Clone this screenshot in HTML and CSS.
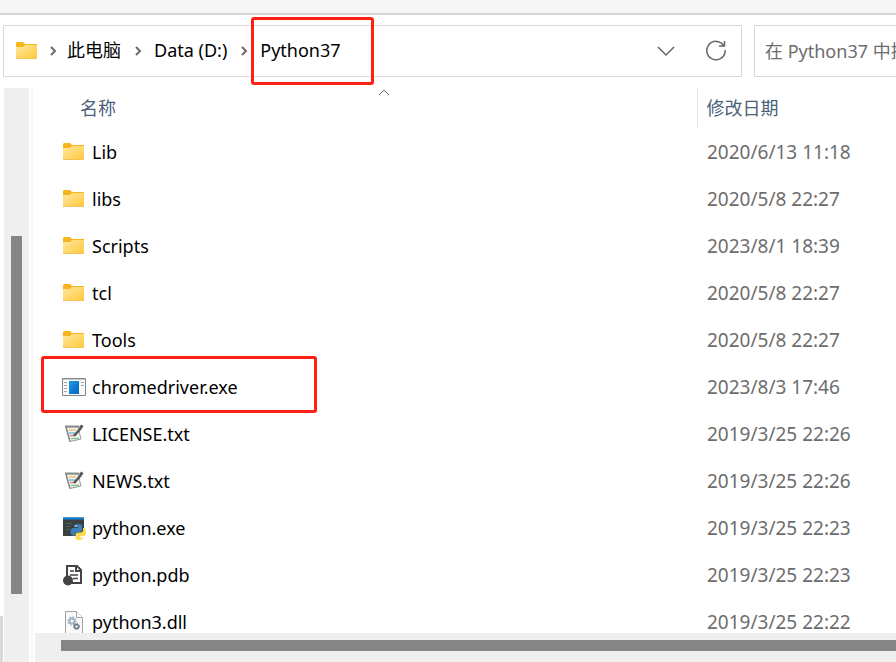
FILE: index.html
```html
<!DOCTYPE html>
<html lang="zh-CN">
<head>
	<meta charset="UTF-8">
	<meta name="viewport" content="width=device-width, initial-scale=1.0">
	<title>Python37</title>
	<link rel="stylesheet" href="styles.css">
</head>
<body>

	<!-- shared icons -->
	<svg class="sprite" aria-hidden="true">
		<defs>
			<linearGradient id="folderFill" x1="0" y1="0" x2="1" y2="1">
				<stop offset="0" stop-color="#ffe8a0"/>
				<stop offset="1" stop-color="#ffc83a"/>
			</linearGradient>
			<linearGradient id="blueFill" x1="0" y1="0" x2="1" y2="1">
				<stop offset="0" stop-color="#1c9ae6"/>
				<stop offset="1" stop-color="#0563bb"/>
			</linearGradient>
			<symbol id="folder" viewBox="0 0 24 24">
				<path d="M1 5V4.500Q1 3 2.500 3H8L10 5H22V8H1z" fill="#f8b41c"/>
				<path d="M1 8H8L10 6H22V19Q22 20 21 20H2Q1 20 1 19z" fill="url(#folderFill)"/>
				<path d="M1 19.500H22" stroke="#f3c25a"/>
			</symbol>
			<symbol id="exe" viewBox="0 0 24 24">
				<path d="M.5 3.500H23.500V20.500H.5z" fill="#fafafa" stroke="#858585"/>
				<path d="M1 4.500H23" stroke="#c9c9c9"/>
				<path d="M7 6H17V19H7z" fill="url(#blueFill)"/>
				<path d="M2 7.500H5M2 10.500H5M2 13.500H5M2 16.500H5M19 7.500H22M19 10.500H22" stroke="#a5a5a5"/>
			</symbol>
			<symbol id="txt" viewBox="0 0 24 24">
				<path d="M4 5H16L19 17L8 19.500z" fill="#f4f4f4" stroke="#999"/>
				<path d="M4 5L8 19.500" stroke="#888" stroke-width="1.500"/>
				<path d="M3 4.500H17" stroke="#8c8c8c" stroke-width="2"/>
				<path d="M7 8H14" stroke="#f0c070" stroke-width="1.500"/>
				<path d="M7 11H13" stroke="#6cc4d8" stroke-width="1.500"/>
				<path d="M8 13.500H12" stroke="#f08078" stroke-width="1.500"/>
				<path d="M9 16.500H17" stroke="#7cc88c" stroke-width="1.500"/>
				<path d="M12 14L19 6" stroke="#555" stroke-width="2.500"/>
				<path d="M18 6L20.500 3.500" stroke="#555" stroke-width="3"/>
			</symbol>
			<symbol id="pyexe" viewBox="0 0 24 24">
				<path d="M1 1.500H22V20H1z" fill="#3d4043"/>
				<path d="M1 1.500H22V3.500H1z" fill="#0d86dc"/>
				<path d="M4 7.500H10M4 10.500H8M4 13.500H8" stroke="#357a3c"/>
				<path d="M12 11V10Q12 8 16 8Q20 8 20 10V14Q20 16 18 16H15Q13 16 13 18V19.500H11.500Q8.500 19.500 8.500 15.500Q8.500 12 11.500 12H16V11z" fill="#3d7fb8"/>
				<path d="M21 12H21.500Q24 12 24 16Q24 20 21.500 20H17.500V21H21V22Q21 24 17.500 24Q13.500 24 13.500 22V18.500Q13.500 16.500 15.500 16.500H18.500Q21 16.500 21 14z" fill="#ffd94f"/>
				<circle cx="14" cy="10" r=".8" fill="#fff"/>
				<circle cx="19" cy="22.300" r=".8" fill="#fff"/>
			</symbol>
			<symbol id="pdb" viewBox="0 0 24 24">
				<path d="M5 3H15L19 7V20H5z" fill="#fff" stroke="#444" stroke-width="2"/>
				<path d="M14 3V8H19" fill="none" stroke="#444" stroke-width="2"/>
				<path d="M8 8H12M8 12H16M11 15.500H16" stroke="#444" stroke-width="1.500"/>
				<circle cx="6" cy="17.500" r="5" fill="#444"/>
			</symbol>
			<symbol id="dll" viewBox="0 0 24 24">
				<path d="M3.500 1.500H14.500L20.500 7.500V23.500H3.500z" fill="#f9f9f9" stroke="#a2a2a2"/>
				<path d="M14.500 1.500V7.500H20.500" fill="#fff" stroke="#a2a2a2"/>
				<circle cx="10" cy="11" r="2.500" fill="none" stroke="#a3b3c1" stroke-width="2"/>
				<circle cx="10" cy="11" r="4" fill="none" stroke="#a3b3c1" stroke-width="1.500" stroke-dasharray="1.500 1.640"/>
				<circle cx="14.500" cy="16.500" r="2" fill="none" stroke="#667784" stroke-width="1.500"/>
				<circle cx="14.500" cy="16.500" r="3" fill="none" stroke="#667784" stroke-dasharray="1.200 1.156"/>
			</symbol>
			<symbol id="chevron" viewBox="0 0 8 10">
				<path d="M2 1L6 5L2 9" fill="none" stroke="#6b6b6b" stroke-width="2"/>
			</symbol>
		</defs>
	</svg>

	<div class="ribbon"></div>

	<div class="toolbar">
		<nav class="address" aria-label="地址">
			<svg class="icon"><use href="#folder"/></svg>
			<svg class="chevron"><use href="#chevron"/></svg>
			<a class="crumb" href="#">此电脑</a>
			<svg class="chevron"><use href="#chevron"/></svg>
			<a class="crumb" href="#">Data (D:)</a>
			<svg class="chevron"><use href="#chevron"/></svg>
			<a class="crumb crumb-marked" href="#">Python37</a>
			<button class="tool history" type="button" aria-label="以前的位置">
				<svg viewBox="0 0 24 24"><path d="M4 8L12 16L20 8" fill="none" stroke="#666" stroke-width="1.500"/></svg>
			</button>
			<button class="tool" type="button" aria-label="刷新">
				<svg viewBox="0 0 24 24"><path d="M20 7A9.200 9.200 0 1 0 21.200 11M20.500 2V7H15" fill="none" stroke="#666" stroke-width="1.500"/></svg>
			</button>
		</nav>
		<input class="search" type="text" aria-label="搜索" placeholder="在 Python37 中搜索">
	</div>

	<div class="main">
		<div class="edge"></div>
		<div class="nav-scroll"><div class="nav-thumb"></div></div>
		<div class="content">
			<div class="list">
				<table class="files">
					<thead>
						<tr>
							<th class="col-name">名称
								<svg class="sort" viewBox="0 0 12 7"><path d="M1 6L6 1L11 6" fill="none" stroke="#666"/></svg>
							</th>
							<th class="col-date">修改日期</th>
						</tr>
					</thead>
					<tbody>
						<tr>
							<td><div class="file"><svg class="icon"><use href="#folder"/></svg>Lib</div></td>
							<td class="date">2020/6/13 11:18</td>
						</tr>
						<tr>
							<td><div class="file"><svg class="icon"><use href="#folder"/></svg>libs</div></td>
							<td class="date">2020/5/8 22:27</td>
						</tr>
						<tr>
							<td><div class="file"><svg class="icon"><use href="#folder"/></svg>Scripts</div></td>
							<td class="date">2023/8/1 18:39</td>
						</tr>
						<tr>
							<td><div class="file"><svg class="icon"><use href="#folder"/></svg>tcl</div></td>
							<td class="date">2020/5/8 22:27</td>
						</tr>
						<tr>
							<td><div class="file"><svg class="icon"><use href="#folder"/></svg>Tools</div></td>
							<td class="date">2020/5/8 22:27</td>
						</tr>
						<tr>
							<td><div class="file file-marked"><svg class="icon"><use href="#exe"/></svg>chromedriver.exe</div></td>
							<td class="date">2023/8/3 17:46</td>
						</tr>
						<tr>
							<td><div class="file"><svg class="icon"><use href="#txt"/></svg>LICENSE.txt</div></td>
							<td class="date">2019/3/25 22:26</td>
						</tr>
						<tr>
							<td><div class="file"><svg class="icon"><use href="#txt"/></svg>NEWS.txt</div></td>
							<td class="date">2019/3/25 22:26</td>
						</tr>
						<tr>
							<td><div class="file"><svg class="icon"><use href="#pyexe"/></svg>python.exe</div></td>
							<td class="date">2019/3/25 22:23</td>
						</tr>
						<tr>
							<td><div class="file"><svg class="icon"><use href="#pdb"/></svg>python.pdb</div></td>
							<td class="date">2019/3/25 22:23</td>
						</tr>
						<tr>
							<td><div class="file"><svg class="icon"><use href="#dll"/></svg>python3.dll</div></td>
							<td class="date">2019/3/25 22:22</td>
						</tr>
					</tbody>
				</table>
			</div>
			<div class="list-scroll"><div class="list-thumb"></div></div>
		</div>
	</div>

</body>
</html>
```
FILE: styles.css
```css
*,
*::after {
	box-sizing: border-box;
}

body {
	margin: 0;
	height: 100vh;
	display: flex;
	flex-direction: column;
	overflow: hidden;
	background: #fff;
	color: #000;
	font-family: "Noto Sans", "Noto Sans CJK SC", sans-serif;
	font-size: 18px;
	line-height: 24px;
}

.sprite {
	position: absolute;
	width: 0;
	height: 0;
}

.icon {
	width: 24px;
	height: 24px;
	flex: none;
}

.ribbon {
	flex: none;
	height: 15px;
	background: #f7f7f7;
	border-bottom: 2px solid #d5d5d5;
}

.toolbar {
	flex: none;
	display: flex;
	gap: 12px;
	padding: 10px 0 11px 3px;
}

.address {
	flex: 1;
	display: flex;
	align-items: center;
	height: 52px;
	padding: 0 12px 0 11px;
	border: 1px solid #d9d9d9;
}

.chevron {
	width: 8px;
	height: 10px;
	flex: none;
	margin: 0 12px 0 13px;
}

.icon + .chevron {
	margin: 0 10px;
}

.crumb {
	position: relative;
	padding-bottom: 2px;
	color: #000;
	text-decoration: none;
	white-space: nowrap;
}

/* red highlight frames */
.crumb-marked::after,
.file-marked::after {
	content: "";
	position: absolute;
	border: 3px solid #fe2012;
	border-radius: 3px;
}

.crumb-marked::after {
	inset: -21px -33px -21px -9px;
}

.tool {
	width: 26px;
	height: 26px;
	padding: 1px;
	border: 0;
	background: none;
}

.tool svg {
	display: block;
	width: 24px;
	height: 24px;
}

.history {
	margin-left: auto;
	margin-right: 24px;
}

.search {
	width: 142px;
	height: 52px;
	padding: 0 0 0 10px;
	border: 1px solid #d9d9d9;
	border-right: 0;
	outline: none;
	font: inherit;
}

.search::placeholder {
	color: #6d6d6d;
	opacity: 1;
}

.main {
	flex: 1;
	min-height: 0;
	display: flex;
}

.edge {
	width: 3px;
	height: 46px;
	margin-right: 1px;
	align-self: flex-end;
	background: #d9d9d9;
}

.nav-scroll {
	width: 25px;
	padding: 148px 7px 0;
	background: #efefef;
}

.nav-thumb {
	height: 358px;
	background: #858585;
}

.content {
	flex: 1;
	min-width: 0;
	margin-left: 2px;
	border-left: 2px solid #f7f7f7;
	display: flex;
	flex-direction: column;
}

.list {
	flex: 1;
	min-height: 0;
	overflow: hidden;
}

.files {
	width: 100%;
	table-layout: fixed;
	border-collapse: collapse;
}

th {
	position: relative;
	height: 40px;
	padding: 0;
	font-weight: normal;
	text-align: left;
	color: #4c607a;
}

.col-name {
	padding-left: 47px;
}

.col-date {
	width: 199px;
	padding-left: 9px;
	border-left: 1px solid #e2e2e2;
}

.sort {
	position: absolute;
	top: 1px;
	left: 50%;
	width: 12px;
	height: 7px;
	margin-left: 13px;
}

td {
	height: 47px;
	padding: 0;
	white-space: nowrap;
}

.file {
	position: relative;
	display: flex;
	align-items: center;
	gap: 6px;
	padding-left: 29px;
}

.file-marked::after {
	top: -19px;
	left: 8px;
	width: 276px;
	height: 57px;
}

.date {
	padding-left: 10px;
	font-size: 19px;
	color: #6d6d6d;
}

.list-scroll {
	flex: none;
	height: 29px;
	margin-left: 2px;
	padding: 7px 0 0 26px;
	background: #efefef;
}

.list-thumb {
	height: 11px;
	background: #858585;
}
```
